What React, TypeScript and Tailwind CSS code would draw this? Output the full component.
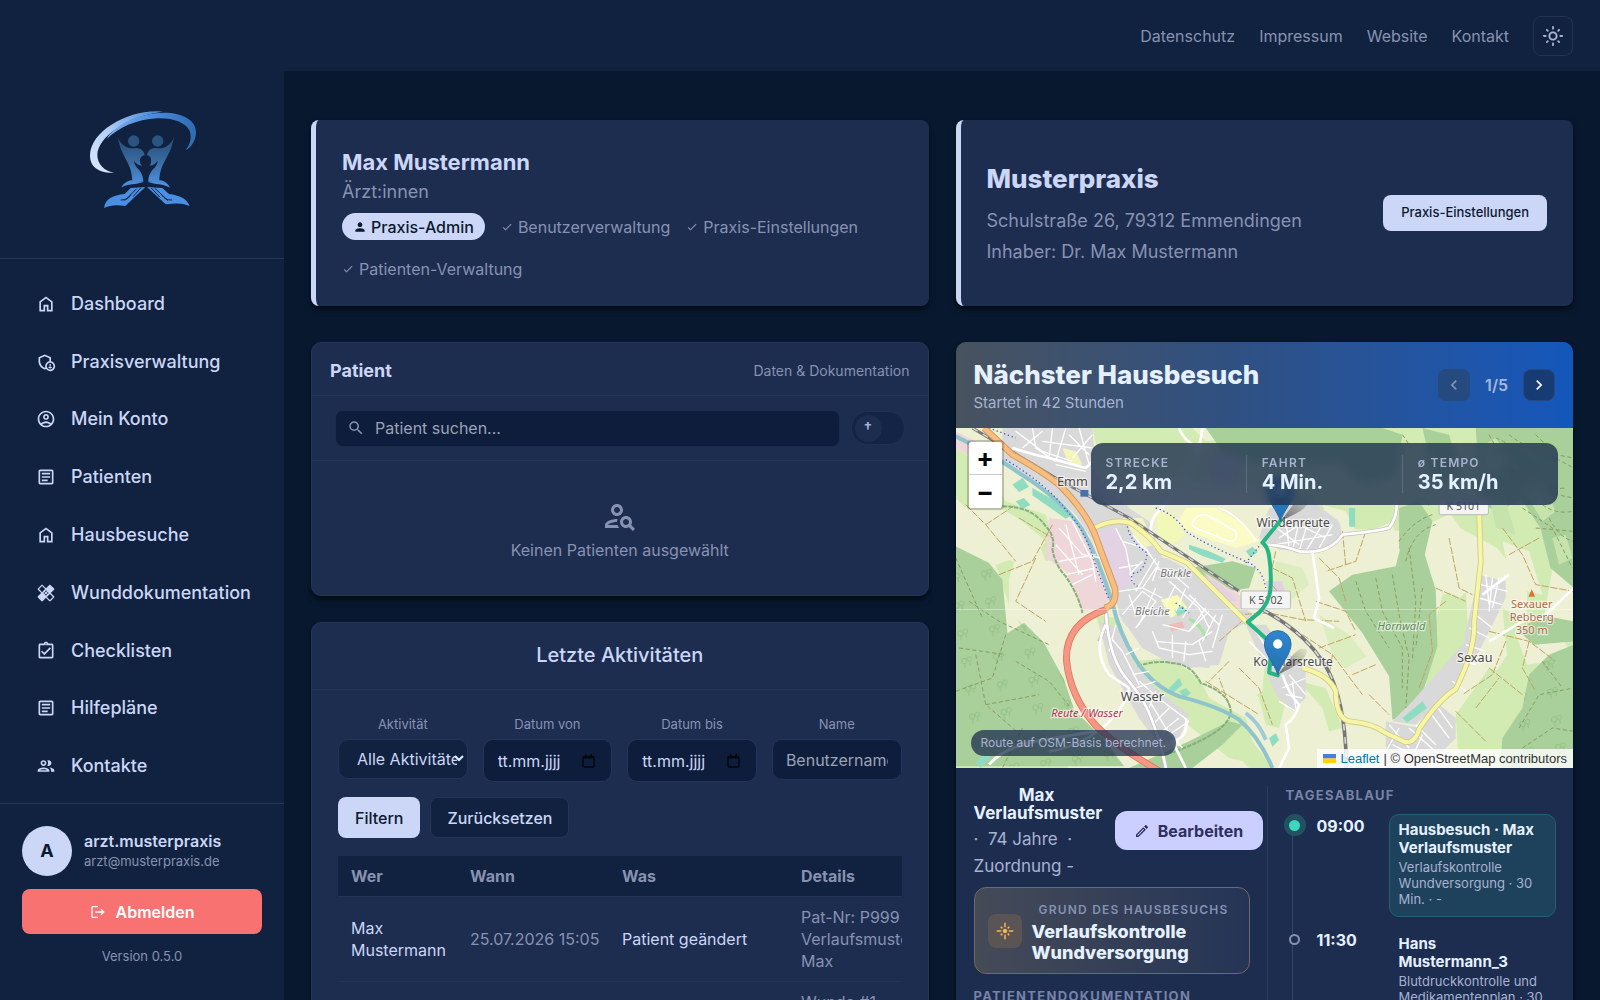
import React from "react";
import type { IconType } from "react-icons";
import {
  MdCheck,
  MdChevronLeft,
  MdChevronRight,
  MdFlare,
  MdHealing,
  MdLogout,
  MdOutlineAccountCircle,
  MdOutlineAdminPanelSettings,
  MdOutlineArticle,
  MdOutlineAssignmentTurnedIn,
  MdOutlineEdit,
  MdOutlineGroup,
  MdOutlineLightMode,
  MdOutlinePersonSearch,
  MdPerson,
  MdSearch,
} from "react-icons/md";

const HomeIcon = ({ className }: { className?: string }) => (
  <svg
    viewBox="0 -960 960 960"
    fill="currentColor"
    width="1em"
    height="1em"
    className={className}
    aria-hidden="true"
  >
    <path d="M240-200h120v-240h240v240h120v-360L480-740 240-560v360Zm-80 80v-480l320-240 320 240v480H520v-240h-80v240H160Z" />
  </svg>
);

const navItems: { label: string; icon: IconType | typeof HomeIcon }[] = [
  { label: "Dashboard", icon: HomeIcon },
  { label: "Praxisverwaltung", icon: MdOutlineAdminPanelSettings },
  { label: "Mein Konto", icon: MdOutlineAccountCircle },
  { label: "Patienten", icon: MdOutlineArticle },
  { label: "Hausbesuche", icon: HomeIcon },
  { label: "Wunddokumentation", icon: MdHealing },
  { label: "Checklisten", icon: MdOutlineAssignmentTurnedIn },
  { label: "Hilfepläne", icon: MdOutlineArticle },
  { label: "Kontakte", icon: MdOutlineGroup },
];

const activities = [
  {
    who: "Max Mustermann",
    when: "25.07.2026 15:05",
    what: "Patient geändert",
    details: ["Pat-Nr: P999", "Verlaufsmuster,", "Max"],
  },
  {
    who: "Max Mustermann",
    when: "25.07.2026 15:04",
    what: "Wunde geändert",
    details: ["Wunde #1", "Verlaufsmuster,", "Max"],
  },
];

const Logo = () => (
  <svg viewBox="261 324 330 306" className="w-[110px] h-[102px]" role="img" aria-label="Logo">
    <defs>
      <linearGradient id="ringOuter" x1="0" y1="1" x2="1" y2="0">
        <stop offset="0" stopColor="#dbe8fd" />
        <stop offset="0.45" stopColor="#b9d1f6" />
        <stop offset="1" stopColor="#3f83d6" />
      </linearGradient>
      <linearGradient id="ringInner" x1="0" y1="0" x2="1" y2="0">
        <stop offset="0" stopColor="#7fb0ee" />
        <stop offset="0.5" stopColor="#4a8ddf" />
        <stop offset="1" stopColor="#2f6bb0" />
      </linearGradient>
      <linearGradient id="body" gradientUnits="userSpaceOnUse" x1="0" y1="400" x2="0" y2="560">
        <stop offset="0" stopColor="#24466e" />
        <stop offset="0.5" stopColor="#38699f" />
        <stop offset="1" stopColor="#5093e2" />
      </linearGradient>
    </defs>
    <path
      d="M488 335C398 324 270 388 270 468c0 32 26 53 72 50-30-6-50-26-50-54 2-56 96-118 196-129Z"
      fill="url(#ringOuter)"
    />
    <path
      d="M320 417c24-44 104-79 172-79 58 0 96 24 96 58 0 24-13 46-31 55 14-18 19-40 12-58-12-26-50-40-98-38-62 3-114 27-151 62Z"
      fill="url(#ringInner)"
    />
    <circle cx="401" cy="423" r="17" fill="#2a5580" />
    <circle cx="473" cy="423" r="17" fill="#2a5580" />
    <g fill="url(#body)">
      <path d="M352 410c14 30 32 37 58 34 14 1 22 9 24 22-10 2-16 10-14 20 1 6 3 8 6 11-10-1-18-6-24-14 2 24 28 26 28 62h-33c-1-50-24-66-37-106Z" />
      <path d="M523 410c-14 30-32 37-58 34-14 1-22 9-24 22 10 2 14 10 12 20-1 6-1 8-4 11 10-1 18-6 24-14-2 24-28 26-28 62h33c1-50 24-66 37-106Z" />
      <path d="M364 562c10-16 22-22 36-21l30 5c-22 8-46 5-66 16Z" />
      <path d="M510 563c-10-17-21-23-35-22l-31 5c22 8 46 5 66 17Z" />
    </g>
    <circle cx="437" cy="484" r="13" fill="#112240" />
    <g fill="#4a8fe2">
      <path d="M312 624c4-28 26-38 62-42l18-18 44-3-60 57c-24-4-44-4-64 6Z" />
      <path d="M569 618c-8-22-30-32-62-36l-20-18-46-3 56 52c28-4 50-5 72 5Z" />
    </g>
    <path
      d="M374 602l36-36M362 600c16 0 22-4 30-14M399 590l24-27M504 602l-40-38M516 600c-16 0-22-4-30-14M480 592l-26-28"
      stroke="#112240"
      strokeWidth="3"
      fill="none"
    />
  </svg>
);

const Sidebar = () => {
  return (
    <aside className="flex flex-col w-[284px] shrink-0 h-screen bg-[#112240] text-[#ccd6f6]">
      <div className="flex items-center justify-center pt-[60px] h-[259px] border-b border-[#22365a]">
        <Logo />
      </div>
      <nav className="flex-1 grid auto-rows-fr pt-4 pb-2 pl-9">
        {navItems.map(({ label, icon: Icon }) => (
          <a key={label} href="#" className="flex items-center gap-[15px] text-lg font-medium">
            <Icon className="size-5 shrink-0" />
            {label}
          </a>
        ))}
      </nav>
      <div className="border-t border-[#22365a] px-[22px] pt-[22px] h-[197px]">
        <div className="flex items-center gap-3">
          <div className="flex items-center justify-center size-[50px] rounded-full bg-[#ccd6f6] text-[#0a192f] text-lg font-bold">
            A
          </div>
          <div>
            <div className="text-base leading-5 font-semibold">arzt.musterpraxis</div>
            <div className="text-[13px] leading-5 text-[#8892b0]">arzt@musterpraxis.de</div>
          </div>
        </div>
        <button className="flex items-center justify-center gap-[10px] mt-[13px] w-[240px] h-[45px] rounded-lg bg-[#f97272] text-white text-base font-semibold">
          <MdLogout className="size-4" />
          Abmelden
        </button>
        <div className="mt-3 text-center text-[13px] leading-5 text-[#8892b0]">Version 0.5.0</div>
      </div>
    </aside>
  );
};

const TopBar = () => {
  return (
    <header className="flex items-center justify-end gap-6 h-[71px] shrink-0 pr-[27px] bg-[#10223f] text-base text-[#8892b0]">
      <a href="#">Datenschutz</a>
      <a href="#">Impressum</a>
      <a href="#">Website</a>
      <a href="#">Kontakt</a>
      <button
        aria-label="Design wechseln"
        className="flex items-center justify-center size-10 rounded-lg border border-[#22344f] text-[#a8b2d1]"
      >
        <MdOutlineLightMode className="size-[22px]" />
      </button>
    </header>
  );
};

const Permission = ({ children }: { children: React.ReactNode }) => (
  <span className="flex items-center gap-[5px] h-[27px] text-[#8892b0]">
    <MdCheck className="size-3" />
    {children}
  </span>
);

const ProfileCard = () => {
  return (
    <section className="rounded-lg border-l-[5px] border-[#ccd6f6] bg-[#1d2d50] shadow-md shadow-black/50 px-[26px] pt-[26px] pb-6">
      <h2 className="text-[22px] leading-[33px] font-bold text-[#ccd6f6]">Max Mustermann</h2>
      <p className="text-lg leading-[26px] text-[#8892b0]">Ärzt:innen</p>
      <div className="flex flex-wrap gap-x-4 gap-y-[15px] mt-2 text-base">
        <span className="flex items-center gap-1 h-[27px] px-[11px] rounded-full bg-[#ccd6f6] text-[#0a192f] font-medium">
          <MdPerson className="size-[14px]" />
          Praxis-Admin
        </span>
        <Permission>Benutzerverwaltung</Permission>
        <Permission>Praxis-Einstellungen</Permission>
        <Permission>Patienten-Verwaltung</Permission>
      </div>
    </section>
  );
};

const PracticeCard = () => {
  return (
    <section className="flex items-center justify-between rounded-lg border-l-[5px] border-[#ccd6f6] bg-[#1d2d50] shadow-md shadow-black/50 px-[26px]">
      <div>
        <h2 className="mb-[6px] text-[26px] leading-10 font-extrabold text-[#ccd6f6]">
          Musterpraxis
        </h2>
        <p className="text-lg leading-[31px] text-[#8892b0]">Schulstraße 26, 79312 Emmendingen</p>
        <p className="text-lg leading-[31px] text-[#8892b0]">Inhaber: Dr. Max Mustermann</p>
      </div>
      <button className="h-9 px-[18px] rounded-lg bg-[#ccd6f6] text-[#0a192f] text-[13px] font-medium">
        Praxis-Einstellungen
      </button>
    </section>
  );
};

const PatientCard = () => {
  return (
    <section className="rounded-[10px] border border-[#22355a] bg-[#1d2d50] shadow-md shadow-black/50 text-[#8892b0]">
      <div className="flex items-center justify-between h-[53px] px-[18px] pt-1 border-b border-[#233554]">
        <h2 className="text-lg font-bold text-[#ccd6f6]">Patient</h2>
        <span className="text-sm">Daten &amp; Dokumentation</span>
      </div>
      <div className="flex items-center gap-[11px] h-[65px] px-[23px] border-b border-[#233554]">
        <label className="flex items-center gap-[10px] flex-1 h-[37px] px-[11px] rounded-lg bg-[#0e1d3b] border border-[#1a2b4b]">
          <MdSearch className="size-[18px] shrink-0" />
          <input
            type="text"
            aria-label="Patient suchen"
            placeholder="Patient suchen..."
            className="flex-1 min-w-0 bg-transparent text-base outline-none placeholder:text-[#9aa3b5]"
          />
        </label>
        <button
          role="switch"
          aria-checked="false"
          aria-label="Verstorbene anzeigen"
          className="flex items-center w-[54px] h-[34px] p-[3px] rounded-full bg-[#142446] border border-[#1e3053]"
        >
          <span className="flex items-center justify-center size-[27px] rounded-full bg-[#1c2d50] text-[15px] leading-5 font-semibold text-[#a8b2d1]">
            †
          </span>
        </button>
      </div>
      <div className="flex flex-col items-center gap-1 h-[134px] pt-[37px] text-base">
        <MdOutlinePersonSearch className="size-9" />
        Keinen Patienten ausgewählt
      </div>
    </section>
  );
};

const CalendarIcon = () => (
  <svg viewBox="0 0 13 14" className="w-[13px] h-[14px]" aria-hidden="true">
    <path d="M2 2.500h9a1 1 0 0 1 1 1V12a1 1 0 0 1-1 1H2a1 1 0 0 1-1-1V3.500a1 1 0 0 1 1-1Z" fill="none" stroke="#05070d" strokeWidth="1.400" />
    <path d="M1 2.500h11v2H1ZM3 0h1.500v3H3ZM8.500 0H10v3H8.500Z" fill="#05070d" />
  </svg>
);

const DateField = ({ id, label }: { id: string; label: string }) => (
  <div className="min-w-0">
    <label htmlFor={id} className="block text-center text-[13px] leading-[29px]">
      {label}
    </label>
    <div className="flex items-center h-[43px] pl-[14px] pr-4 rounded-[10px] bg-[#0e1d3b] border border-[#22355a]">
      <input
        id={id}
        type="text"
        placeholder="tt.mm.jjjj"
        className="flex-1 min-w-0 bg-transparent text-base outline-none placeholder:text-[#ccd6f6]"
      />
      <button aria-label={`${label} wählen`}>
        <CalendarIcon />
      </button>
    </div>
  </div>
);

const ActivityCard = () => {
  return (
    <section className="rounded-t-[10px] border border-[#22355a] bg-[#1d2d50] shadow-md shadow-black/50 text-[#8892b0]">
      <h2 className="h-[67px] leading-[64px] text-center text-xl/16 font-medium text-[#ccd6f6] border-b border-[#233554]">
        Letzte Aktivitäten
      </h2>
      <div className="px-[26px] pt-5">
        <div className="grid grid-cols-4 items-start gap-[15px]">
          <div className="min-w-0">
            <label htmlFor="type" className="block text-center text-[13px] leading-[29px]">
              Aktivität
            </label>
            <div className="relative">
              <select
                id="type"
                className="w-full h-10 pl-[18px] pr-[10px] appearance-none rounded-[10px] bg-[#112240] border border-[#22355a] text-base text-[#ccd6f6]"
              >
                <option>Alle Aktivitäten</option>
              </select>
              <svg
                viewBox="0 0 10 7"
                className="absolute right-1 top-4 w-[10px] h-[7px]"
                fill="none"
                stroke="#e6f1ff"
                strokeWidth="2"
              >
                <path d="M1 1l4 4 4-4" />
              </svg>
            </div>
          </div>
          <DateField id="from" label="Datum von" />
          <DateField id="to" label="Datum bis" />
          <div className="min-w-0">
            <label htmlFor="name" className="block text-center text-[13px] leading-[29px]">
              Name
            </label>
            <input
              id="name"
              type="text"
              placeholder="Benutzername"
              className="w-full h-[41px] px-[13px] rounded-[10px] bg-[#0e1d3b] border border-[#22355a] text-base placeholder:text-[#9aa3b5]"
            />
          </div>
        </div>
        <div className="flex gap-[10px] mt-[15px] text-base font-medium">
          <button className="h-[41px] px-[17px] rounded-lg bg-[#ccd6f6] text-[#0a192f]">
            Filtern
          </button>
          <button className="h-[41px] px-4 rounded-lg bg-[#112240] border border-[#22355a] text-[#ccd6f6]">
            Zurücksetzen
          </button>
        </div>
        <div className="mt-[18px] overflow-hidden">
          <table className="w-[640px] table-fixed text-base leading-[22px] text-left">
            <colgroup>
              <col className="w-[119px]" />
              <col className="w-[152px]" />
              <col className="w-[179px]" />
              <col />
            </colgroup>
            <thead className="bg-[#112240]">
              <tr className="h-10 border-b border-[#233554]">
                <th className="px-[13px] font-bold">Wer</th>
                <th className="px-[13px] font-bold">Wann</th>
                <th className="px-[13px] font-bold">Was</th>
                <th className="px-[13px] font-bold">Details</th>
              </tr>
            </thead>
            <tbody>
              {activities.map((row) => (
                <tr key={row.when} className="border-b border-[#233554]">
                  <td className="px-[13px] py-[9px] text-[#ccd6f6]">{row.who}</td>
                  <td className="pl-[13px] whitespace-nowrap">{row.when}</td>
                  <td className="px-[13px] text-[#ccd6f6]">{row.what}</td>
                  <td className="px-[13px] py-[9px]">
                    {row.details.map((line) => (
                      <div key={line}>{line}</div>
                    ))}
                  </td>
                </tr>
              ))}
            </tbody>
          </table>
        </div>
      </div>
    </section>
  );
};

const Pin = ({ x, y }: { x: number; y: number }) => (
  <g transform={`translate(${x} ${y})`}>
    <path d="M0 0L40-52q26-36 48-22-4 34-44 52Z" fill="url(#pinShadow)" />
    <path
      d="M0 0C-8-30-40-62-40-92a40 40 0 0 1 80 0C40-62 8-30 0 0Z"
      fill="url(#pin)"
      stroke="#2a6cab"
      strokeWidth="3"
    />
    <circle cy="-92" r="14" fill="#fff" />
  </g>
);

// Rows of short streets used to fill the built-up areas
const streets = [
  "M490 490l70-10 40-60 60 20M500 560l60-70 40 30-60 80M520 500l20 60M560 480l60 30M600 480l-50 110M620 590l80 20 60-60M640 460l90 80 30 60M600 640l110 10 60-40M660 470l-30 60M690 480l-30 70M720 510l-40 60M750 540l-50 70M780 560l-40 80M700 500l90 90M650 620v70M690 640l-6 60M730 640l20 60M800 560l-30 100M590 610l20 50 90 20 70-10",
  "M480 300l30 60 20 100M500 340l70 20 40 60M530 320l60 70M560 400l-40 40M610 400l-20 60M630 420l70 60M600 390l-60 100M490 420l60-10",
  "M180 10l80 60 90 30M200 60l60-50M230 0l10 60 60 40M290 0l-10 90M330 0l-30 100M340 20l60 60M350 90l60-70M260 40l150 20M370 0l30 110M300 110l90 20",
  "M310 300l70 80 60 10M300 350l80 90M330 290l40 150M350 280l60 120 10 60M310 400l110-20M330 440l90-20M350 470l60-30",
  "M970 330l60-40 80 40M990 270l10 90M1030 280l-20 90M1060 270l-30 100M1100 290l-50 80M960 350l170-30M1130 290l-40 70M950 290l80 60",
  "M440 600l60 70 50 100M480 590l-20 80M510 680l40-20M530 740l50-10M540 780l60-20M570 800l60 100 50 60M600 790l-20 50M640 840l-50 50M670 870l-50 40M700 880l-60 40M550 760l70 60 80 60",
  "M900 610l40 60M880 640l60 60M980 780l70-30M990 800l50 10M1010 760l10 80M970 820l50 30M1000 740l50 60",
  "M1590 440l10 90M1610 450l-10 100M1575 470l80 20M1570 510l70 20M1560 560l50 40M1540 600l60 30M1530 650l60 20M1510 700l50 10M1490 760l40 30M1630 450l-20 90",
  "M1300 890l60 70M1330 900l-50 90M1380 890l60 60M1420 850l60 80M1440 830l50 70M1310 950l100 50M1400 920l-40 90M1360 900l90 80",
];

const RouteMap = () => (
  <svg
    viewBox="0 0 1854 1020"
    preserveAspectRatio="xMidYMid slice"
    className="absolute inset-0 size-full"
    role="img"
    aria-label="Karte mit Route"
  >
    <defs>
      <linearGradient id="pin" x1="0" y1="0" x2="0" y2="1">
        <stop offset="0" stopColor="#2e87cf" />
        <stop offset="1" stopColor="#2570ae" />
      </linearGradient>
      <linearGradient id="pinShadow" x1="0" y1="1" x2="1" y2="0">
        <stop offset="0" stopColor="#000" stopOpacity="0.5" />
        <stop offset="1" stopColor="#000" stopOpacity="0.05" />
      </linearGradient>
      <pattern id="trees" width="96" height="84" patternUnits="userSpaceOnUse" patternTransform="rotate(-8)">
        <g fill="none" stroke="#94c087" strokeWidth="3">
          <circle cx="24" cy="24" r="8" />
          <path d="M24 32v14" />
          <circle cx="40" cy="20" r="7" />
          <path d="M40 27v12" />
        </g>
      </pattern>
    </defs>
    <rect width="1854" height="1020" fill="#edf0d3" />

    {/* meadows */}
    <g fill="#cdebae" opacity="0.85">
      <path d="M0 60l90 60 60 100 120 40 40 130-40 10-30-80-100-40-60 10-80-80Z" />
      <path d="M120 410l60-20-20 60 40 90 60 40-40 40-50-60Z" />
      <path d="M420 560l60 10 70 150 90 80 160 60 90 80 60 80H880l-100-110-240-120-80-90Z" />
      <path d="M540 700l100-10 90 60 30 60 110 60 40 140-90-20-160-130-150-60Z" />
      <path d="M410 0h300l40 40 300-40 420 0 30 250-130 60-270-10-100-110-560-60Z" />
      <path d="M1300 0h554v420l-60-20-30 170-50 10 0-110-90-110-110-60Z" />
      <path d="M1460 500l70-20 10 190-70 100-60 10 10-120Z" />
      <path d="M1640 540l90 50 124 0v140l-130 20-130 130-30-60 90-140Z" />
      <path d="M860 740l70-30 60 110-20 80-40-10-20-80Z" />
      <path d="M1030 760l80 20 50 120-40 10-20-70Z" />
      <path d="M0 900l120-30 130 60 90 90H0Z" />
      <path d="M960 400l80 20 20 50-70 60-40-60Z" opacity="0.6" />
      <path d="M1500 860l100-140 130 40-60 260h-160Z" />
      <path d="M1090 560l90 60 80 100-20 80-110-120Z" opacity="0.6" />
    </g>

    {/* farmland patches */}
    <g fill="#edf0d4">
      <path d="M20 240l100-10 80 50 70 60-60 70-110-30-80-60Z" />
      <path d="M160 450l110 10 60 90-80 70-90-60Z" />
      <path d="M860 620l70 60-10 110-70 50-100-70Z" />
      <path d="M1170 720l110-60 20 190-80 20Z" />
      <path d="M1220 320l90-40 20 90-80 60-70-10Z" />
      <path d="M1480 340l70-10 20 130-60 50-50-30Z" />
      <path d="M1640 340l80 30 40 130-90-20Z" />
      <path d="M460 860l130 40 60 120H490Z" />
      <path d="M1680 620l140 10 34 60-140 20Z" />
      <path d="M1100 230l70 20 40 80-60 60-20-60Z" />
    </g>

    {/* woods */}
    <g fill="#a9d09a">
      <path d="M0 355l100 50 40 50 15 160 50-30 60 60 60 110 30 90 90 90 60 80H0Z" />
      <path d="M750 0h530l60 20-20 120-90 30-90-70-180 20-160-50Z" />
      <path d="M1120 490l70-50 130-25 20-80 50-10 50 160 5 170-60 190-75 30-10-130-80-130Z" />
      <path d="M700 420l130-20 70 20-20 60-60 10Z" />
      <path d="M1560 0h294v480l-70-60-30-120-60-90-60 40-60-20Z" />
      <path d="M1400 0l80 20 30 110-70 40Z" />
      <path d="M1640 930l60-90 20-100 60-60 74-30v370h-220Z" />
      <path d="M1690 610l60-50 104 20v60l-120 10Z" />
      <path d="M1330 240l60-20 40 60-30 130 30 140-40-30-60-160Z" />
      <path d="M520 1020l180-80 120-60 40 10-60 60-90 70Z" />
    </g>
    <path d="M0 355l100 50 40 50 15 160 50-30 60 60 60 110 30 90 90 90 60 80H0Z" fill="url(#trees)" />
    <path d="M1640 930l60-90 20-100 60-60 74-30v370h-220Z" fill="url(#trees)" />
    <g fill="#c6e3ad">
      <path d="M1570 60l50-30 40 60-30 60-50-10ZM1700 180l60-20 40 90-40 30ZM1600 200l50 20 30 100-60-20ZM1790 330l40-10 20 70-40 20Z" />
    </g>

    {/* built-up areas */}
    <g fill="#dad9d9">
      <path d="M140 0h270l10 130 100 110 60 40 40 110 130 60 90 60 60 60-80 40-30 100-90 10-130-60-70-80-30-90-50-140-60-90-90-80-130-70Z" />
      <path d="M480 390l150 0 120 60 110 110-70 100-30 60-110-10-90-50-70-100Z" />
      <path d="M910 330l30-90 130-20 80 60 10 40-60 50-130-5Z" />
      <path d="M430 580l60 20 40 100 60 70 110 90-30 70-60 20-60-80-90-160Z" />
      <path d="M870 590l60 0 60 80 60 50 0 90-40 40-50-50-40-100Z" />
      <path d="M1570 440l80 20 0 50-40 80-50 100-70 90-60 60-50 50-70-10 60-60 150-170Z" />
      <path d="M1290 880l100 20 60-70 50 40 0 60-90 90h-120Z" />
      <path d="M750 90l60-20 60 40-40 60-60-10Z" />
    </g>
    <g fill="#efd6d8">
      <path d="M280 270l70 10 60 60 60 160-30 40-60 10-50-120-60-40Z" />
      <path d="M0 10l80 40 60 60-40 10L0 60Z" />
      <path d="M740 430l110 70 20 40-30 0Z" />
    </g>
    <g fill="#e2d2e4">
      <path d="M420 310l60-10 40 70 10 90-40 30-50-110Z" />
      <path d="M930 460l50 0 10 40-50 10Z" />
      <path d="M700 420l80 40 70 60-30 0Z" />
    </g>
    <path d="M690 240l90 0 90 50 40 50-70 20-90-30-90-40Z" fill="#fbfbc6" />
    <path d="M500 270l60 0 40 80-40 10Z" fill="#f7fab8" opacity="0.8" />
    <path d="M600 250l50 10 40 60-40 30-40-20Z" fill="#f1f8b8" />
    <path d="M320 60l40 10 20 40-40 0Z" fill="#f3f6b8" />
    <path d="M615 515l50-15 30 40-50 30Z" fill="#f7fab8" />
    <path d="M640 590l40-10 6 20-40 10Z" fill="#eebcb6" />
    <g fill="#8fdcc0">
      <path d="M655 545l26-12 12 18-26 14ZM170 170l30-20 20 26-30 16ZM230 180l90 50 30 30-20 12-100-70ZM180 220l24-10 20 20-24 14ZM640 780l30-30 10 20-30 26ZM670 790l20-10 16 16-20 14ZM1180 240h18v56h-18ZM1340 870l60-50 14 20-60 44ZM870 370l20-14 16 16-22 16ZM940 930l20-14 10 20-20 20ZM60 1000l30-26 14 14-30 32ZM700 350l60 20 50 22-10 12-60-20-40-20Z" />
    </g>
    <path d="M700 572q40 20 50 60" fill="none" stroke="#a9e3a4" strokeWidth="10" />

    {/* field tracks */}
    <g fill="none" stroke="#c2a35f" strokeWidth="3" strokeDasharray="22 5">
      <path d="M30 230l60 60 90 110M90 290l90-60M240 390l-60 130 90 60M190 270l100 60M130 440l100-40 60-110" />
      <path d="M950 420l60 30 40 130M960 370l-20 90 50 60M1090 390l60 60 20 70M1080 520l90 30 30 60M1160 310l10 100M1230 310l-30 90-90 30" />
      <path d="M790 640l80-70M820 700l-60 60M850 720l60 60 40 110M750 760l160 100M820 830l-30-80M1040 620l90 60 90 120M1090 660l110-40M1130 680l-10 60M1190 740l70-30M1240 800l60 60" />
      <path d="M1480 330l30 150 40 20M1440 480l90 40M1640 300l60 80 40 90 114 20M1660 380l90-50M1600 610l120 30 80 60M1650 640l-40 100-90 60M1560 840l70-90M1720 640l-20 80 40 70M1500 850l90 90M1600 720l100 80" />
      <path d="M840 560l100-5 100 20 110 5M1470 520l-50 40 10 110-40 110" />
    </g>
    <g fill="none" stroke="#8a9b5c" strokeWidth="3" strokeDasharray="12 8">
      <path d="M0 390l80 180M40 520l90 60 150 70M10 660l140 20M60 680l30 150 150 130M150 620l-40 130-110 40M180 700l100 60 90 110M90 830l160-30M200 900l-60 120" />
      <path d="M1200 460l30 90 70 110M1260 450l20 100 60 110v120M1310 440l20 120 30 130-10 150M1360 360l20 160-10 180M1400 480l-20 180" />
      <path d="M1340 20l60 90 20 130M1600 20l60 110 90 60 104 20M1640 60l120 70M1700 240l90 60 60 120M1740 300l114 10M1690 900l60-100 104-20M1700 960l90-60 64 10M1760 700l60 80" />
      <path d="M1330 340q40-60 100-80M1350 400q20-90 90-110" />
      <path d="M1620 30q60 20 90 90t120 60M1660 20q50 40 120 60l74 40M1740 20l60 60 54 10M1760 230q40 30 90 20M1780 270q30 60 74 70" />
    </g>
    <path d="M140 235q90 0 130 60 30 30 20 70 10 50 40 80 40 60 50 110" fill="none" stroke="#86b07b" strokeWidth="6" strokeDasharray="14 3" />
    <path d="M545 715q60-20 100-10 60 0 90 60 90 30 90 90-10 60-180 120" fill="none" stroke="#86b07b" strokeWidth="6" strokeDasharray="14 3" />

    {/* river */}
    <path d="M0 25q120 60 190 110 130 80 190 170 50 90 90 220 20 90 70 170 50 80 130 110 120 30 180 70 60 50 100 145" fill="none" stroke="#8fc4cc" strokeWidth="12" />
    <path d="M870 855q40 30 60 80" fill="none" stroke="#9fcbd8" strokeWidth="12" />
    <path d="M100 1010q40-50 140-70l180-30" fill="none" stroke="#fff" strokeWidth="9" />

    {/* minor roads */}
    <g fill="none" stroke="#fff" strokeWidth="4">
      {streets.map((d) => (
        <path key={d} d={d} />
      ))}
    </g>
    <g fill="none" stroke="#c9c3c3" strokeWidth="12" strokeLinejoin="round">
      <path d="M920 350q60 0 110 20 90 10 130-50 100-10 140-20 30-40 20-90M430 640q30-60 20-90M450 550q10 150 70 210 50 60 70 120 30 80 40 140" />
    </g>
    <g fill="none" stroke="#fff" strokeWidth="8" strokeLinejoin="round">
      <path d="M170 60q60 20 110 30l110 30 20-20M600 360q-30-60 0-100l60-70M920 350q60 0 110 20 90 10 130-50 100-10 140-20 30-40 20-90M670 0q20 50 70 60M740 0q-10 90-60 150" />
      <path d="M450 550q10 150 70 210 50 60 70 120 30 80 40 140M450 590q-40 80 10 150l60 40q-10 60-80 120-80 60-160 70M690 870q10 60-40 70l40 80" />
      <path d="M1070 370l20 140-15 60 60 30M980 740q20 60 50 90-10 40-40 60l10 70-30 60M1600 640l100-60 60-10 94-90M1580 500l80-60" />
      <path d="M900 340q-50-80-110-100M720 270q20-20 50 0l70 40q10 30-20 30l-100-40q-20-10 0-30Z" strokeWidth="5" />
    </g>

    {/* cycle routes */}
    <g fill="none" stroke="#3d5fd0" strokeWidth="4" strokeDasharray="4 8">
      <path d="M150 95q130 80 180 150 60 60 90 170l40 100M600 240q60 20 90 70 60 40 180 90 50 20 60 80M515 295q10 50 60 80-10 60-40 60-20 20 10 40M870 405l40-50M660 525l40 30M100 0l80 30" />
    </g>

    {/* railway */}
    <g fill="none">
      <path d="M50 0L300 150 520 270 640 350 850 490" stroke="#777" strokeWidth="9" />
      <path d="M50 0L300 150 520 270 640 350 850 490" stroke="#d8d8d8" strokeWidth="4" strokeDasharray="18 18" />
      <path d="M920 545q130 70 190 170 60 100 62 305" stroke="#777" strokeWidth="11" />
      <path d="M920 545q130 70 190 170 60 100 62 305" stroke="#d8d8d8" strokeWidth="5" strokeDasharray="20 20" />
    </g>

    {/* main roads */}
    <g fill="none" strokeLinejoin="round">
      <path d="M415 300q60-30 110-15 60 40 90 85 50 20 80 35l180 180M1040 720q80 20 100 70 0 80 40 90 70 5 110 35l60 28q30 0 40-40 60-90 110-120 60-120 55-200l20-180-6-190" stroke="#cfcb80" strokeWidth="17" />
      <path d="M415 300q60-30 110-15 60 40 90 85 50 20 80 35l180 180M1040 720q80 20 100 70 0 80 40 90 70 5 110 35l60 28q30 0 40-40 60-90 110-120 60-120 55-200l20-180-6-190" stroke="#f6f5a8" strokeWidth="12" />
      <path d="M85 0l85 80q90 50 140 90 90 90 115 170l52 140q8 50-30 60" stroke="#cf9c62" strokeWidth="20" />
      <path d="M85 0l85 80q90 50 140 90 90 90 115 170l52 140q8 50-30 60" stroke="#fabd80" strokeWidth="14" />
      <path d="M450 545q-120 40-118 150 10 110 90 200 60 60 190 135" stroke="#dc7763" strokeWidth="21" />
      <path d="M450 545q-120 40-118 150 10 110 90 200 60 60 190 135" stroke="#f59783" strokeWidth="16" />
    </g>

    {/* labels */}
    <g fontFamily="'Noto Sans', sans-serif" textAnchor="middle" stroke="#fff" strokeWidth="7" strokeOpacity="0.6" paintOrder="stroke" fill="#4a4a4a">
      <g fontSize="38">
        <text x="350" y="174">Emm</text>
        <text x="560" y="818">Wasser</text>
        <text x="1557" y="702">Sexau</text>
      </g>
      <g fontSize="36">
        <text x="1012" y="297">Windenreute</text>
        <text x="1012" y="715">Kollmarsreute</text>
      </g>
      <g fontSize="33" fontStyle="italic" fill="#777">
        <text x="660" y="446">Bürkle</text>
        <text x="590" y="562">Bleiche</text>
        <text x="1337" y="606" fill="#5e8a57">Hornwald</text>
      </g>
      <text x="394" y="867" fontSize="33" fontStyle="italic" fill="#b8334a">
        Reute / Wasser
      </text>
      <g fontSize="33" fill="#b3693f">
        <text x="1728" y="540">Sexauer</text>
        <text x="1728" y="580">Rebberg</text>
        <text x="1728" y="619">350 m</text>
      </g>
    </g>
    <path d="M1728 484l10 22h-20Z" fill="#d9733a" />
    <rect x="374" y="186" width="24" height="20" fill="#4a6fae" />
    <g fill="#f4f4f4" stroke="#bbb" strokeWidth="3">
      <rect x="856" y="489" width="148" height="54" rx="5" />
      <rect x="1450" y="212" width="148" height="48" rx="5" />
    </g>
    <g fontFamily="'Noto Sans', sans-serif" fontSize="32" fill="#555" textAnchor="middle">
      <text x="930" y="528">K 5102</text>
      <text x="1523" y="247">K 5101</text>
    </g>
    <path d="M0 545h1854" stroke="#fff" strokeWidth="2" opacity="0.7" />

    {/* route */}
    <path
      d="M974 278l-54 66q16 12 20 40 8 50 4 100-4 40-34 70l-34 28 66 60q6 40-2 92l26 8"
      fill="none"
      stroke="#26b582"
      strokeWidth="12"
      strokeLinejoin="round"
      strokeLinecap="round"
    />
    <Pin x={974} y={280} />
    <Pin x={966} y={740} />
  </svg>
);

const Stat = ({ label, value }: { label: string; value: string }) => (
  <div className="flex-1 px-[15px] border-r border-white/15 last:border-r-0">
    <div className="text-xs leading-4 font-semibold tracking-widest text-[#a8b2d1]">{label}</div>
    <div className="text-xl leading-[22px] font-bold text-[#e6f1ff]">{value}</div>
  </div>
);

const MapPanel = () => {
  return (
    <div className="relative h-[340px] overflow-hidden">
      <RouteMap />
      <div className="absolute left-[11px] top-3 flex flex-col rounded border-2 border-black/20 bg-white bg-clip-padding text-black text-[26px] leading-[32px] font-bold">
        <button aria-label="Hineinzoomen" className="w-[33px] h-[33px] border-b border-[#ccc]">
          +
        </button>
        <button aria-label="Herauszoomen" className="w-[33px] h-[33px]">
          −
        </button>
      </div>
      <div className="absolute left-[135px] right-[15px] top-[15px] flex py-3 rounded-xl bg-[#1d2f4f]/80 backdrop-blur-xs">
        <Stat label="STRECKE" value="2,2 km" />
        <Stat label="FAHRT" value="4 Min." />
        <Stat label="ø TEMPO" value="35 km/h" />
      </div>
      <div className="absolute left-[15px] bottom-3 h-[26px] px-[10px] rounded-full bg-[#1d2f4f]/75 text-xs leading-[26px] text-[#a8b2d1]">
        Route auf OSM-Basis berechnet.
      </div>
      <div className="absolute right-0 bottom-0 flex items-center gap-1 h-[19px] px-[6px] bg-white/80 font-['Liberation_Sans',sans-serif] text-[13px] text-[#333]">
        <svg viewBox="0 0 13 9" className="w-[13px] h-[9px]" aria-hidden="true">
          <path fill="#4c7be1" d="M0 0h13v4.500H0z" />
          <path fill="#ffd500" d="M0 4.500h13V9H0z" />
        </svg>
        <a href="#" className="text-[#0078a8]">Leaflet</a>
        <span>| © OpenStreetMap contributors</span>
      </div>
    </div>
  );
};

const ScheduleEntry = ({
  time,
  title,
  desc,
  active,
}: {
  time: string;
  title: string;
  desc: string;
  active?: boolean;
}) => (
  <li className="flex items-start">
    <div
      className={
        active
          ? "relative flex items-center justify-center size-[22px] -ml-[2px] mr-[11px] rounded-full bg-[#22525f]"
          : "relative flex items-center justify-center size-[22px] -ml-[2px] mr-[11px]"
      }
    >
      <span
        className={
          active
            ? "size-[11px] rounded-full bg-[#3dd6c0]"
            : "size-[11px] rounded-full border-2 border-[#8892b0] bg-[#1d2d50]"
        }
      />
    </div>
    <span className="w-[72px] text-base leading-6 font-bold text-[#e6f1ff]">{time}</span>
    <div
      className={
        active
          ? "flex-1 px-[9px] pt-[6px] pb-[9px] rounded-[10px] border border-[#24606f] bg-[#1f425c]"
          : "flex-1 px-[9px] pt-[6px] pb-[9px] rounded-[10px] border border-transparent"
      }
    >
      <div className="text-[15px] leading-[18px] font-bold text-[#e6f1ff]">{title}</div>
      <div className="mt-[2px] text-[13px] leading-4 text-[#a8b2d1]">{desc}</div>
    </div>
  </li>
);

const VisitCard = () => {
  return (
    <section className="overflow-hidden rounded-t-[10px] bg-[#1d2d50] shadow-md shadow-black/50">
      <div className="flex items-center justify-between h-[86px] px-[18px] bg-linear-to-r from-[#48525f] via-[#2f5082] via-45% to-[#1357bb]">
        <div className="pt-1">
          <h2 className="text-[26px] leading-8 font-extrabold text-[#e6f1ff]">
            Nächster Hausbesuch
          </h2>
          <p className="text-[15px] leading-6 text-[#a8b2d1]">Startet in 42 Stunden</p>
        </div>
        <div className="flex items-center gap-[15px]">
          <button
            disabled
            aria-label="Vorheriger"
            className="flex items-center justify-center size-8 rounded-lg bg-[#244a80] text-[#7f95ba]"
          >
            <MdChevronLeft className="size-5" />
          </button>
          <span className="text-base font-semibold text-[#a8b8dc]">1/5</span>
          <button
            aria-label="Nächster"
            className="flex items-center justify-center size-8 rounded-lg bg-[#173b73] border border-[#27497f] text-white"
          >
            <MdChevronRight className="size-5" />
          </button>
        </div>
      </div>
      <MapPanel />
      <div className="flex p-[18px] pr-[17px]">
        <div className="w-[294px] shrink-0 pr-[17px] border-r border-[#2a3c60]">
          <div className="flex items-start gap-[14px] w-[289px]">
            <div className="flex-1 text-[17px] leading-[27px] text-[#a8b2d1]">
              <h3 className="w-[126px] text-center leading-[18px] font-bold text-[#e6f1ff]">
                Max Verlaufsmuster
              </h3>
              <div className="mt-1">·&nbsp; 74 Jahre &nbsp;·</div>
              <div>Zuordnung -</div>
            </div>
            <button className="flex items-center justify-center gap-2 w-[148px] h-[39px] mt-[25px] rounded-xl bg-[#cacfff] text-base font-bold text-[#2f2f5f]">
              <MdOutlineEdit className="size-4" />
              Bearbeiten
            </button>
          </div>
          <div className="flex items-center gap-[10px] mt-[7px] h-[87px] px-[13px] rounded-xl border border-[#74695a] bg-linear-to-r from-[#454a57] to-[#253456]">
            <div className="flex items-center justify-center size-[34px] shrink-0 rounded-lg bg-[#5a5554] text-[#fbb454]">
              <MdFlare className="size-[18px]" />
            </div>
            <div className="flex-1">
              <div className="text-center text-xs leading-[22px] font-semibold tracking-widest text-[#8492b4]">
                GRUND DES HAUSBESUCHS
              </div>
              <div className="text-lg/[21px] font-extrabold text-[#e6f1ff]">
                Verlaufskontrolle Wundversorgung
              </div>
            </div>
          </div>
          <h4 className="mt-3 text-[13px] leading-5 font-bold tracking-widest text-[#7683a6]">
            PATIENTENDOKUMENTATION
          </h4>
        </div>
        <div className="flex-1 min-w-0 pl-[18px]">
          <h4 className="text-[13px] leading-[18px] font-bold tracking-widest text-[#7683a6]">
            TAGESABLAUF
          </h4>
          <div className="relative mt-[10px]">
            <div className="absolute left-[6px] top-4 bottom-0 w-px bg-[#33466c]" />
            <ul className="flex flex-col gap-[11px]">
              <ScheduleEntry
                time="09:00"
                title="Hausbesuch · Max Verlaufsmuster"
                desc="Verlaufskontrolle Wundversorgung · 30 Min. · -"
                active
              />
              <ScheduleEntry
                time="11:30"
                title="Hans Mustermann_3"
                desc="Blutdruckkontrolle und Medikamentenplan · 30 Min. · -"
              />
            </ul>
          </div>
        </div>
      </div>
    </section>
  );
};

export default function App() {
  return (
    <div className="flex h-screen overflow-hidden bg-[#08182e] font-[Inter,sans-serif]">
      <Sidebar />
      <div className="flex flex-col flex-1 min-w-0">
        <TopBar />
        <main className="flex-1 min-h-0 overflow-hidden px-[27px] pt-[49px]">
          <div className="grid grid-cols-2 gap-[27px]">
            <ProfileCard />
            <PracticeCard />
          </div>
          <div className="grid grid-cols-2 items-start gap-[27px] mt-9">
            <div className="flex flex-col gap-[26px]">
              <PatientCard />
              <ActivityCard />
            </div>
            <VisitCard />
          </div>
        </main>
      </div>
    </div>
  );
}
